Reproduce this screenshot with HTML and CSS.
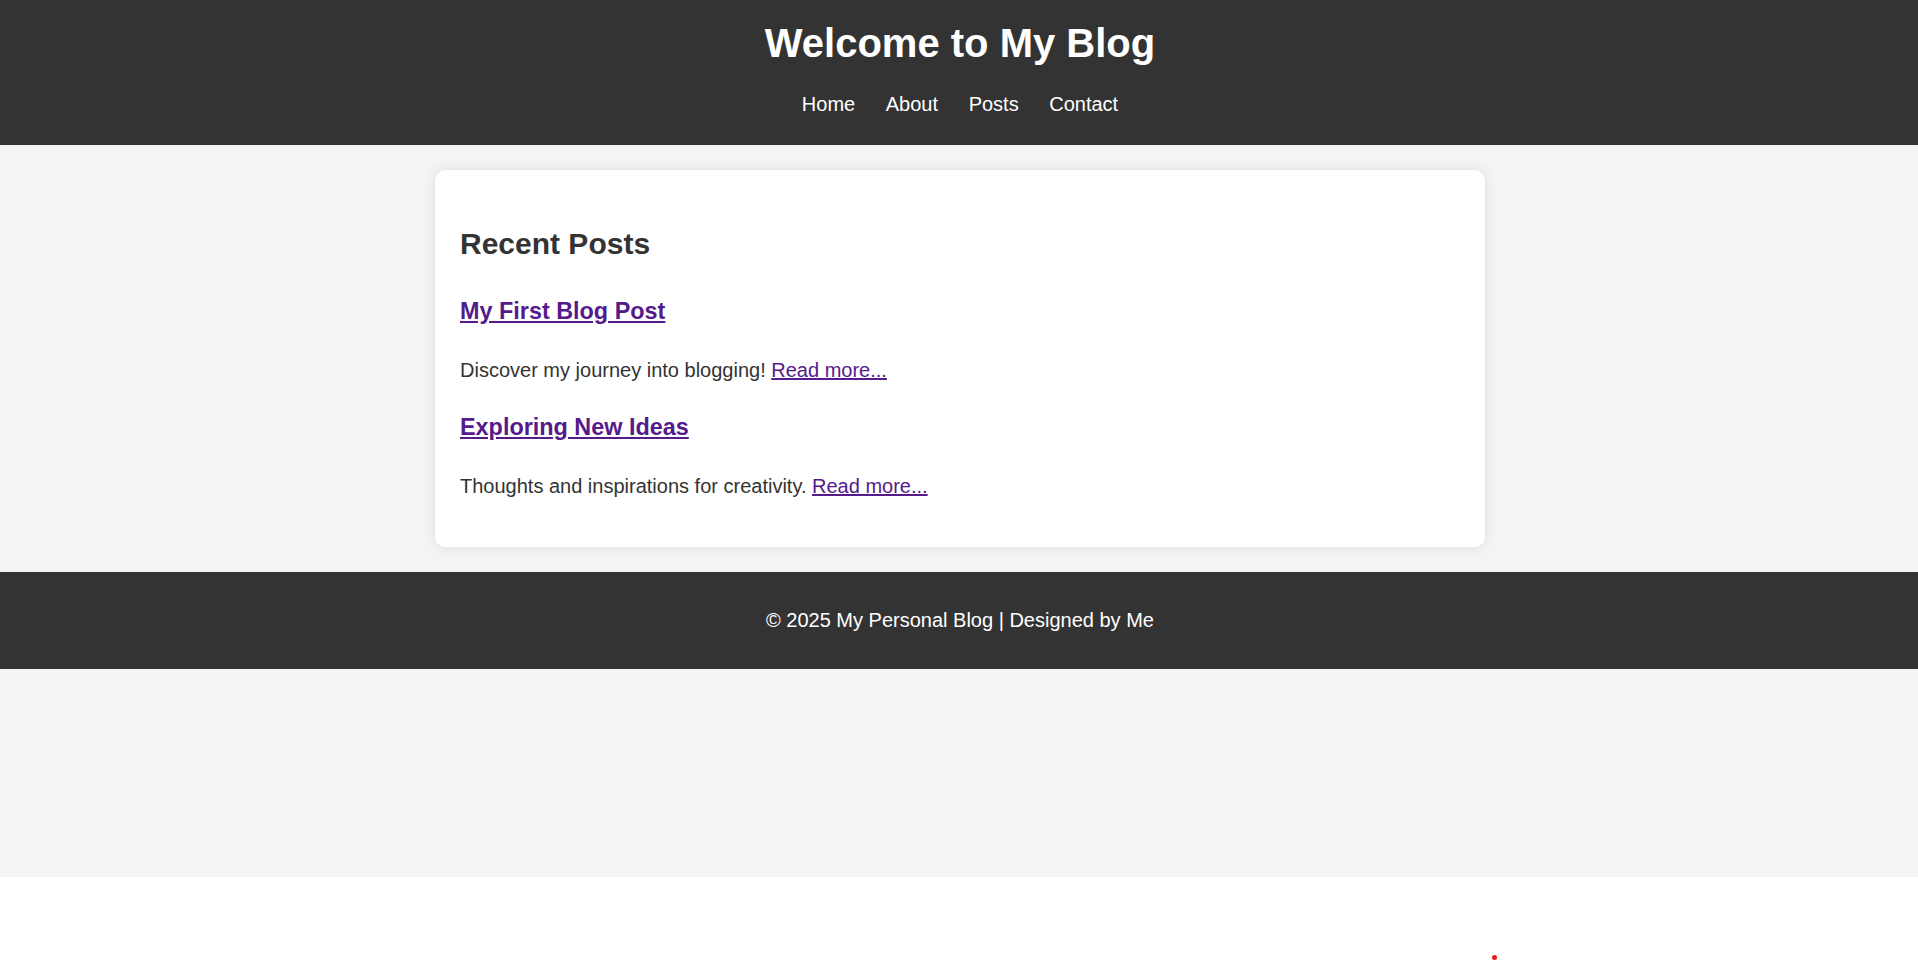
FILE: index.html
```html
<!DOCTYPE html>
<html lang="en">
<head>
<meta charset="utf-8">
<title>My Blog</title>
<link rel="stylesheet" href="styles.css">
</head>
<body>
<div class="page">
  <header class="site-header">
    <h1 class="site-title">Welcome to My Blog</h1>
    <nav class="site-nav">
      <a href="#">Home</a>
      <a href="#">About</a>
      <a href="#">Posts</a>
      <a href="#">Contact</a>
    </nav>
  </header>
  <main class="content">
    <section class="card">
      <h2 class="card-title">Recent Posts</h2>
      <article class="post">
        <h3 class="post-title"><a class="visited" href="#">My First Blog Post</a></h3>
        <p class="post-text">Discover my journey into blogging! <a class="visited" href="#">Read more...</a></p>
      </article>
      <article class="post">
        <h3 class="post-title"><a class="visited" href="#">Exploring New Ideas</a></h3>
        <p class="post-text">Thoughts and inspirations for creativity. <a class="visited" href="#">Read more...</a></p>
      </article>
    </section>
  </main>
  <footer class="site-footer">
    <p class="footer-text">&copy; 2025 My Personal Blog | Designed by Me</p>
  </footer>
</div>
<div class="cursor-dot"></div>
</body>
</html>
```
FILE: styles.css
```css
html, body {
  margin: 0;
  padding: 0;
  background: #ffffff;
}

body {
  font-family: "Liberation Sans", Arial, sans-serif;
  font-size: 20px;
  line-height: 1.6;
  color: #333333;
}

.page {
  background: #f4f4f4;
  min-height: 877px;
  display: flow-root;
}

.site-header {
  background: #333333;
  color: #ffffff;
  text-align: center;
  padding: 11px 0 25px 2px;
}

.site-title {
  margin: 0 0 13px;
  font-size: 40px;
  line-height: 64px;
  font-weight: bold;
}

.site-nav {
  display: flex;
  justify-content: center;
  gap: 30.6px;
  line-height: 32px;
}

.site-nav a {
  color: #ffffff;
  text-decoration: none;
}

.content {
  display: block;
  padding: 25px 0 25px 2px;
}

.card {
  max-width: 1050px;
  box-sizing: border-box;
  margin: 0 auto;
  background: #ffffff;
  padding: 25px;
  border-radius: 10px;
  box-shadow: 0 0 12px rgba(0, 0, 0, 0.1);
}

.card-title {
  font-size: 30px;
  margin: 24.9px 0;
  line-height: 1.6;
}

.post-title {
  font-size: 23.4px;
  margin: 23.4px 0;
  line-height: 1.6;
}

.post-text {
  margin: 20px 0;
}

.visited {
  color: #551a8b;
}

.site-footer {
  background: #333333;
  color: #ffffff;
  text-align: center;
  padding: 12.5px 0 12.5px 2px;
}

.footer-text {
  margin: 20px 0;
}

.cursor-dot {
  position: absolute;
  left: 1492px;
  top: 955px;
  width: 5px;
  height: 5px;
  border-radius: 50%;
  background: #ee1c1c;
}
```
